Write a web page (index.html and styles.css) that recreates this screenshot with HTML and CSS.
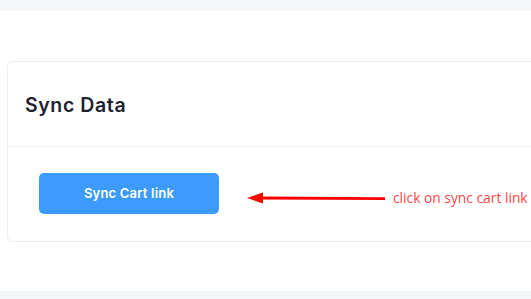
FILE: index.html
```html
<!DOCTYPE html>
<html>
<head>
<meta charset="utf-8">
<link rel="stylesheet" href="styles.css">
</head>
<body>
<div class="topbar"></div>
<main class="content">
  <section class="card">
    <header class="card-header">
      <h2 class="card-title">Sync Data</h2>
    </header>
    <div class="card-body">
      <button class="btn-sync">Sync Cart link</button>
      <div class="annotation">
        <svg class="arrow" width="140" height="14" viewBox="0 0 140 14">
          <polygon points="0,7 16,1.5 16,12.5" fill="#ff0000"/>
          <line x1="12" y1="7" x2="138" y2="7.6" stroke="#ff0000" stroke-width="2.8"/>
        </svg>
        <span class="note">click on sync cart link</span>
      </div>
    </div>
  </section>
</main>
<div class="bottombar"></div>
</body>
</html>
```
FILE: styles.css
```css
html, body {
  margin: 0;
  padding: 0;
  background: #ffffff;
  overflow: hidden;
  width: 531px;
  height: 299px;
}
body {
  font-family: Inter, "Open Sans", sans-serif;
  display: flex;
  flex-direction: column;
}
.topbar {
  height: 11px;
  background: #f3f7fa;
  flex: none;
}
.content {
  padding: 50px 0 0 7px;
  height: 240px;
  flex: none;
  box-sizing: border-box;
  overflow: hidden;
}
.card {
  width: 560px;
  border: 1px solid #eceef3;
  border-radius: 6px;
  background: #fff;
  box-sizing: border-box;
}
.card-header {
  height: 85px;
  border-bottom: 1px solid #eef0f3;
  display: flex;
  align-items: center;
  padding-left: 17px;
  box-sizing: border-box;
}
.card-title {
  margin: 0;
  font-size: 19.5px;
  font-weight: 600;
  color: #1f2233;
  letter-spacing: 0.6px;
  padding-top: 2px;
}
.card-body {
  position: relative;
  padding: 26px 0 27px 31px;
}
.btn-sync {
  display: block;
  width: 180px;
  height: 41px;
  border: 0;
  border-radius: 5px;
  background: #3d9bff;
  color: #fff;
  font-family: Inter, "Open Sans", sans-serif;
  font-size: 13px;
  font-weight: 600;
  letter-spacing: 0.2px;
  padding: 0 0 1px 0;
}
.annotation {
  position: absolute;
  left: 239px;
  top: 44px;
  display: flex;
  align-items: center;
  gap: 6px;
  white-space: nowrap;
}
.arrow {
  display: block;
}
.note {
  font-family: "Open Sans", sans-serif;
  font-size: 13.8px;
  color: #ff4747;
  line-height: 14px;
}
.bottombar {
  margin-top: 40px;
  height: 10px;
  background: #f3f7fa;
  flex: none;
}
```
